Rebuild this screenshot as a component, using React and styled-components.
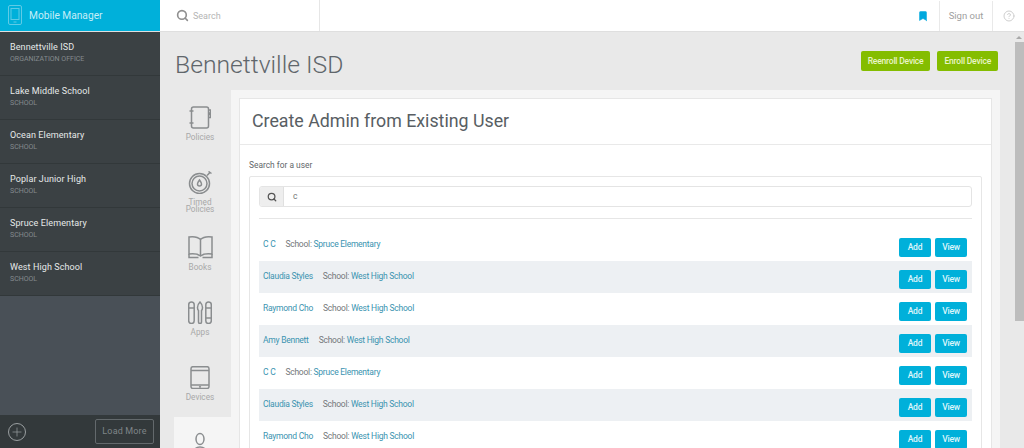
import styled, { createGlobalStyle } from "styled-components";
import { Search, Bookmark, HelpCircle, Plus } from "lucide-react";

const Global = createGlobalStyle`
  html, body { margin: 0; padding: 0; height: 100%; overflow: hidden; }
  body { font-family: Roboto, "Liberation Sans", sans-serif; background: #e9e9e9; }
  * { box-sizing: border-box; }
`;

const schools = [
  { name: "Bennettville ISD", type: "ORGANIZATION OFFICE" },
  { name: "Lake Middle School", type: "SCHOOL" },
  { name: "Ocean Elementary", type: "SCHOOL" },
  { name: "Poplar Junior High", type: "SCHOOL" },
  { name: "Spruce Elementary", type: "SCHOOL" },
  { name: "West High School", type: "SCHOOL" },
];

const users = [
  { name: "C C", school: "Spruce Elementary" },
  { name: "Claudia Styles", school: "West High School" },
  { name: "Raymond Cho", school: "West High School" },
  { name: "Amy Bennett", school: "West High School" },
  { name: "C C", school: "Spruce Elementary" },
  { name: "Claudia Styles", school: "West High School" },
  { name: "Raymond Cho", school: "West High School" },
];

const Page = styled.div`
  width: 1024px;
  height: 448px;
  display: flex;
  flex-direction: column;
  overflow: hidden;
`;

const TopBar = styled.header`
  flex: 0 0 31px;
  display: flex;
  background: #fff;
  border-bottom: 1px solid #dfdfdf;
`;

const Brand = styled.div`
  width: 160px;
  height: 31px;
  display: flex;
  align-items: center;
  gap: 7px;
  padding: 0 0 1px 8px;
  background: #00b0da;
  color: #c6eef8;
  font-size: 10.2px;
`;

const SearchBox = styled.div`
  width: 160px;
  display: flex;
  align-items: center;
  gap: 4px;
  padding-left: 16px;
  border-right: 1px solid #e6e6e6;
  color: #b5b5b5;
  font-size: 9px;
  svg { color: #8f8f8f; }
`;

const TopRight = styled.div`
  margin-left: auto;
  display: flex;
  align-items: center;
  svg { display: block; }
`;

const BookmarkWrap = styled.div`
  padding-right: 10px;
  color: #00a8de;
`;

const SignOut = styled.div`
  width: 54px;
  height: 30px;
  line-height: 30px;
  text-align: center;
  border-left: 1px solid #e9e9e9;
  border-right: 1px solid #e9e9e9;
  color: #a0a0a0;
  font-size: 9.5px;
`;

const HelpWrap = styled.div`
  width: 31px;
  display: flex;
  justify-content: center;
  color: #cfcfcf;
`;

const Below = styled.div`
  flex: 1;
  display: flex;
  min-height: 0;
`;

const Sidebar = styled.aside`
  width: 160px;
  display: flex;
  flex-direction: column;
  background: #495057;
`;

const SchoolItem = styled.div`
  height: 44px;
  padding: 10px 0 0 10px;
  background: #3b4144;
  border-bottom: 1px solid #32383a;
`;

const SchoolName = styled.div`
  color: #e6e9e9;
  font-size: 9px;
  line-height: 11px;
  letter-spacing: 0.1px;
`;

const SchoolType = styled.div`
  margin-top: 2px;
  color: #858b8e;
  font-size: 7px;
  line-height: 9px;
`;

const SideFooter = styled.div`
  margin-top: auto;
  height: 33px;
  display: flex;
  align-items: center;
  justify-content: space-between;
  padding: 0 6px 0 8px;
  background: #33393b;
`;

const RoundPlus = styled.div`
  width: 18px;
  height: 18px;
  display: flex;
  align-items: center;
  justify-content: center;
  border: 1px solid #9a9fa1;
  border-radius: 50%;
  color: #9a9fa1;
`;

const LoadMore = styled.div`
  width: 59px;
  height: 25px;
  line-height: 23px;
  text-align: center;
  border: 1px solid #63696c;
  border-radius: 2px;
  color: #7f8588;
  font-size: 9px;
  letter-spacing: 0.15px;
`;

const Main = styled.main`
  flex: 1;
  display: flex;
  min-width: 0;
`;

const Content = styled.div`
  flex: 1;
  min-width: 0;
  display: flex;
  flex-direction: column;
`;

const Heading = styled.div`
  flex: 0 0 58px;
  display: flex;
  align-items: flex-start;
  justify-content: space-between;
  padding: 0 16px 0 15px;
`;

const Title = styled.h1`
  margin: 16px 0 0;
  color: #60666b;
  font-size: 24.7px;
  line-height: 34px;
  font-weight: 300;
`;

const Actions = styled.div`
  display: flex;
  gap: 7px;
  margin-top: 19px;
`;

const GreenButton = styled.div`
  height: 20px;
  line-height: 20px;
  padding: 0 7px;
  background: #84bd00;
  border-radius: 2px;
  color: #eaf5c8;
  font-size: 8.5px;
  letter-spacing: -0.2px;
  font-weight: 500;
`;

const Body = styled.div`
  flex: 1;
  min-height: 0;
  display: flex;
  padding-right: 14px;
`;

const Rail = styled.nav`
  width: 71px;
  padding: 2px 0 0 14px;
`;

const RailItem = styled.div`
  width: 57px;
  height: 65px;
  padding: 14px 5px 0 0;
  display: flex;
  flex-direction: column;
  align-items: center;
  background: ${(p) => (p.$active ? "#f5f5f5" : "transparent")};
  color: #a8a8a8;
  font-size: 8.2px;
  line-height: 7px;
  text-align: center;
  svg { display: block; margin-bottom: 5px; flex: none; }
`;

const Panel = styled.section`
  flex: 1;
  min-width: 0;
  padding: 8px 8px 0;
  background: #f5f5f5;
`;

const Card = styled.div`
  height: 400px;
  background: #fff;
  border: 1px solid #e6e6e6;
`;

const CardHead = styled.div`
  height: 46px;
  padding: 0 12px 3px;
  display: flex;
  align-items: center;
  border-bottom: 1px solid #e9e9e9;
  color: #585e63;
  font-size: 17.8px;
`;

const CardBody = styled.div`
  padding: 15px 9px 0;
`;

const Label = styled.div`
  color: #62666a;
  font-size: 8.4px;
  line-height: 10px;
  margin-bottom: 6px;
`;

const ResultBox = styled.div`
  height: 300px;
  padding: 9px;
  border: 1px solid #e6e6e6;
  border-radius: 2px;
`;

const InputGroup = styled.div`
  height: 21px;
  display: flex;
  border: 1px solid #e4e4e4;
  border-radius: 3px;
  overflow: hidden;
`;

const InputAddon = styled.div`
  width: 24px;
  display: flex;
  align-items: center;
  justify-content: center;
  background: #eeeeee;
  border-right: 1px solid #e0e0e0;
  color: #555;
`;

const InputValue = styled.div`
  flex: 1;
  padding-left: 9px;
  line-height: 19px;
  color: #777;
  font-size: 8.5px;
`;

const Rule = styled.hr`
  margin: 11px 0 10px;
  border: 0;
  border-top: 1px solid #e6e6e6;
`;

const UserRow = styled.div`
  height: 32px;
  display: flex;
  align-items: center;
  padding: 0 5px 2px 4px;
  background: ${(p) => (p.$shaded ? "#edf0f3" : "#fff")};
  font-size: 8.5px;
  letter-spacing: -0.25px;
  color: #73777a;
`;

const UserLink = styled.span`
  color: #3a93b0;
`;

const UserSchool = styled.span`
  margin-left: 10px;
`;

const RowActions = styled.div`
  margin-left: auto;
  align-self: flex-start;
  margin-top: 9px;
  display: flex;
  gap: 4px;
`;

const BlueButton = styled.div`
  width: 32px;
  height: 19px;
  line-height: 19px;
  text-align: center;
  background: #00b0da;
  border-radius: 2px;
  color: #dff6fb;
  font-size: 8.5px;
  letter-spacing: -0.2px;
  font-weight: 500;
`;

const ScrollTrack = styled.div`
  width: 10px;
  padding-top: 4px;
  display: flex;
  flex-direction: column;
  align-items: center;
`;

const ScrollArrow = styled.div`
  width: 0;
  height: 0;
  border-left: 3px solid transparent;
  border-right: 3px solid transparent;
  border-bottom: 3px solid #a9a9a9;
`;

const ScrollThumb = styled.div`
  width: 9px;
  height: 279px;
  margin-top: 3px;
  background: #bdbdbd;
`;

const stroke = { fill: "none", stroke: "#8a8d8f", strokeWidth: 1.5 };

function PhoneIcon() {
  return (
    <svg width="14" height="20" viewBox="0 0 14 20" fill="none" stroke="#5fcbe6" strokeWidth="1">
      <rect x="0.5" y="0.5" width="13" height="19" rx="1.5" />
      <rect x="3" y="3.500" width="8" height="11" />
      <path d="M5.500 17h3" />
    </svg>
  );
}

function PoliciesIcon() {
  return (
    <svg width="22" height="23" viewBox="0 0 22 23" {...stroke}>
      <rect x="2.5" y="1" width="17" height="21" rx="2" />
      <path d="M0.5 5h4M0.5 17h4M19.500 4h2v3h-2M19.500 8.500h2v3h-2" />
    </svg>
  );
}

function TimedIcon() {
  return (
    <svg width="25" height="23" viewBox="0 0 25 23" {...stroke}>
      <circle cx="11.5" cy="12.500" r="10" />
      <circle cx="11.5" cy="12.500" r="7.500" />
      <path d="M11.500 9c-1.500 2-2 3-2 4a2 2 0 0 0 4 0c0-1-.5-2-2-4zM19 4.500l3-3M20.500 .5l3 2" />
    </svg>
  );
}

function BooksIcon() {
  return (
    <svg width="25" height="23" viewBox="0 0 25 23" {...stroke}>
      <path d="M12.500 3.500C10 1 5 .5 1 1v17c4-.5 9 0 11.500 2 2.500-2 7.500-2.500 11.500-2V1C20 .5 15 1 12.500 3.500zM12.500 3.500V20" />
      <path d="M1 18v3.500h9.500M24 18v3.500h-9.500" />
    </svg>
  );
}

function AppsIcon() {
  return (
    <svg width="24" height="23" viewBox="0 0 24 23" {...stroke}>
      <rect x="0.700" y="1" width="5.500" height="21.500" rx="2.750" />
      <rect x="17.800" y="1" width="5.500" height="21.500" rx="2.750" />
      <path d="M0.700 7h5.500M17.800 7h5.500M17.800 17h5.500" />
      <path d="M12 1c-2 2-2.500 4-2.500 5.500S10 9 10.500 9.500V21a1.500 1.500 0 0 0 3 0V9.500c.5-.5 1-1.500 1-3S14 3 12 1z" />
    </svg>
  );
}

function DevicesIcon() {
  return (
    <svg width="20" height="23" viewBox="0 0 20 23" {...stroke}>
      <rect x="1" y="0.700" width="18" height="21.800" rx="2" />
      <path d="M1 4.500h18M1 19h18" />
      <circle cx="10" cy="20.800" r="0.400" />
    </svg>
  );
}

function AdminIcon() {
  return (
    <svg width="20" height="28" viewBox="0 0 20 28" {...stroke}>
      <ellipse cx="10" cy="8" rx="4" ry="5.500" />
      <path d="M2 26c0-6 3-10 8-10s8 4 8 10" />
    </svg>
  );
}

const navItems = [
  { label: "Policies", icon: <PoliciesIcon /> },
  { label: "Timed Policies", icon: <TimedIcon /> },
  { label: "Books", icon: <BooksIcon /> },
  { label: "Apps", icon: <AppsIcon /> },
  { label: "Devices", icon: <DevicesIcon /> },
];

export default function App() {
  return (
    <Page>
      <Global />
      <TopBar>
        <Brand>
          <PhoneIcon />
          Mobile Manager
        </Brand>
        <SearchBox>
          <Search size={13} strokeWidth={3} />
          Search
        </SearchBox>
        <TopRight>
          <BookmarkWrap>
            <Bookmark size={12} fill="currentColor" strokeWidth={1} />
          </BookmarkWrap>
          <SignOut>Sign out</SignOut>
          <HelpWrap>
            <HelpCircle size={12} strokeWidth={2} />
          </HelpWrap>
        </TopRight>
      </TopBar>
      <Below>
        <Sidebar>
          {schools.map((s) => (
            <SchoolItem key={s.name}>
              <SchoolName>{s.name}</SchoolName>
              <SchoolType>{s.type}</SchoolType>
            </SchoolItem>
          ))}
          <SideFooter>
            <RoundPlus>
              <Plus size={14} strokeWidth={1.2} />
            </RoundPlus>
            <LoadMore>Load More</LoadMore>
          </SideFooter>
        </Sidebar>
        <Main>
          <Content>
            <Heading>
              <Title>Bennettville ISD</Title>
              <Actions>
                <GreenButton>Reenroll Device</GreenButton>
                <GreenButton>Enroll Device</GreenButton>
              </Actions>
            </Heading>
            <Body>
              <Rail>
                {navItems.map((item) => (
                  <RailItem key={item.label}>
                    {item.icon}
                    {item.label}
                  </RailItem>
                ))}
                <RailItem $active>
                  <AdminIcon />
                </RailItem>
              </Rail>
              <Panel>
                <Card>
                  <CardHead>Create Admin from Existing User</CardHead>
                  <CardBody>
                    <Label>Search for a user</Label>
                    <ResultBox>
                      <InputGroup>
                        <InputAddon>
                          <Search size={10} strokeWidth={3} />
                        </InputAddon>
                        <InputValue>c</InputValue>
                      </InputGroup>
                      <Rule />
                      {users.map((u, i) => (
                        <UserRow key={i} $shaded={i % 2 === 1}>
                          <UserLink>{u.name}</UserLink>
                          <UserSchool>
                            School: <UserLink>{u.school}</UserLink>
                          </UserSchool>
                          <RowActions>
                            <BlueButton>Add</BlueButton>
                            <BlueButton>View</BlueButton>
                          </RowActions>
                        </UserRow>
                      ))}
                    </ResultBox>
                  </CardBody>
                </Card>
              </Panel>
            </Body>
          </Content>
          <ScrollTrack>
            <ScrollArrow />
            <ScrollThumb />
          </ScrollTrack>
        </Main>
      </Below>
    </Page>
  );
}
